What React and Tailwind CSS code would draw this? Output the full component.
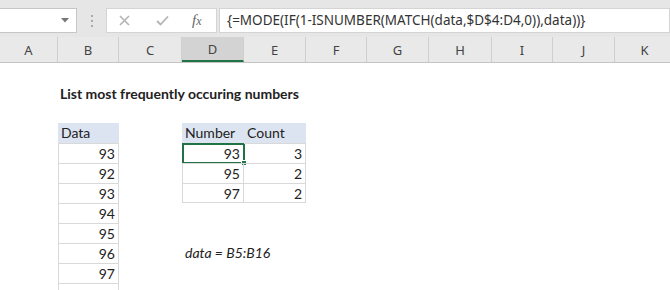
import React from 'react';

const cols = [
  { key: 'A', w: 58 },
  { key: 'B', w: 61 },
  { key: 'C', w: 63 },
  { key: 'D', w: 62 },
  { key: 'E', w: 62 },
  { key: 'F', w: 61 },
  { key: 'G', w: 62 },
  { key: 'H', w: 63 },
  { key: 'I', w: 61 },
  { key: 'J', w: 62 },
  { key: 'K', w: 60 },
];

const data = ['93', '92', '93', '94', '95', '96', '97', ''];
const results = [
  ['93', '3'],
  ['95', '2'],
  ['97', '2'],
];

function Cell({ w, className = '', children }) {
  return (
    <div className={`shrink-0 h-full relative ${className}`} style={{ width: w }}>
      {children}
    </div>
  );
}

function Row({ children }) {
  return <div className="flex h-[20px]">{children}</div>;
}

export default function App() {
  const cell = 'border-[#d9d9d9]';
  return (
    <div className="w-[670px] h-[290px] overflow-hidden bg-white text-[#222]" style={{ fontFamily: 'Lato, "Open Sans", sans-serif' }}>
      {/* formula bar */}
      <div className="h-[37px] bg-[#e6e6e6] flex items-start pt-[8px]" style={{ fontFamily: '"Noto Sans", "Open Sans", sans-serif' }}>
        <div className="ml-[-1px] w-[78px] h-[25px] bg-white border border-[#c6c6c6] flex items-center justify-end pr-[7px]">
          <svg width="8" height="5" viewBox="0 0 8 5"><path d="M0 0 L8 0 L4 4.5 Z" fill="#777" /></svg>
        </div>
        <div className="w-[29px] h-[25px] flex flex-col items-center justify-center gap-[3px]">
          <span className="w-[2px] h-[2px] bg-[#aaa]" />
          <span className="w-[2px] h-[2px] bg-[#aaa]" />
          <span className="w-[2px] h-[2px] bg-[#aaa]" />
        </div>
        <div className="w-[111px] h-[25px] bg-white border border-[#d4d4d4] flex items-center">
          <svg className="ml-[12px]" width="11" height="11" viewBox="0 0 11 11">
            <path d="M1 1 L10 10 M10 1 L1 10" stroke="#b4b4b4" strokeWidth="1.6" />
          </svg>
          <svg className="ml-[26px]" width="13" height="11" viewBox="0 0 13 11">
            <path d="M1 6 L4.5 9.5 L12 1.5" stroke="#b4b4b4" strokeWidth="1.8" fill="none" />
          </svg>
          <span className="ml-[23px] text-[15px] italic text-[#666]" style={{ fontFamily: '"Liberation Serif", serif' }}>
            f<span className="text-[12px]">x</span>
          </span>
        </div>
        <div className="ml-[2px] flex-1 h-[25px] bg-white border border-[#d4d4d4] flex items-center pl-[7px] text-[13.5px] text-[#333]">
          {'{=MODE(IF(1-ISNUMBER(MATCH(data,$D$4:D4,0)),data))}'}
        </div>
      </div>

      {/* column headers */}
      <div className="flex h-[26px] bg-[#e9e9e9] border-b border-[#c4c4c4]" style={{ fontFamily: '"Noto Sans", "Open Sans", sans-serif' }}>
        {cols.map((c) => (
          <div
            key={c.key}
            className={`shrink-0 h-full flex items-center justify-center pt-[3px] text-[13px] text-[#444] border-r border-[#cfcfcf] ${c.key === 'D' ? 'bg-[#d3d3d3] border-b-2 border-b-[#217346]' : ''}`}
            style={{ width: c.w }}
          >
            {c.key}
          </div>
        ))}
      </div>

      {/* sheet */}
      <div className="text-[14px] leading-[20px]">
        <Row />
        <Row>
          <Cell w={58} />
          <Cell w={240} className="font-bold pl-[2px] pt-[1px] whitespace-nowrap">List most frequently occuring numbers</Cell>
        </Row>
        <Row />
        {data.map((v, i) => (
          <React.Fragment key={i}>
            {i === 0 && (
              <Row>
                <Cell w={58} />
                <Cell w={61} className="bg-[#dde4f1] pl-[3px]">Data</Cell>
                <Cell w={63} />
                <Cell w={62} className="bg-[#dde4f1] pl-[3px]">Number</Cell>
                <Cell w={62} className="bg-[#dde4f1] pl-[3px]">Count</Cell>
              </Row>
            )}
            <Row>
              <Cell w={58} />
              <Cell w={61} className={`border-l border-r border-t ${cell} text-right pr-[3px]`}>{v}</Cell>
              <Cell w={63} />
              {i < 3 && (
                <>
                  <Cell w={62} className={`border-l border-r border-t ${i === 2 ? 'border-b' : ''} ${cell} text-right pr-[3px]`}>
                    {results[i][0]}
                    {i === 0 && (
                      <div className="absolute left-[-1px] top-[-1px] w-[63px] h-[21px] border-2 border-[#217346]">
                        <div className="absolute right-[-4px] bottom-[-4px] w-[6px] h-[6px] bg-[#217346] border border-white" />
                      </div>
                    )}
                  </Cell>
                  <Cell w={62} className={`border-r border-t ${i === 2 ? 'border-b' : ''} ${cell} text-right pr-[3px]`}>{results[i][1]}</Cell>
                </>
              )}
              {i === 5 && (
                <Cell w={124} className="italic pl-[3px] whitespace-nowrap">data = B5:B16</Cell>
              )}
            </Row>
          </React.Fragment>
        ))}
      </div>
    </div>
  );
}
